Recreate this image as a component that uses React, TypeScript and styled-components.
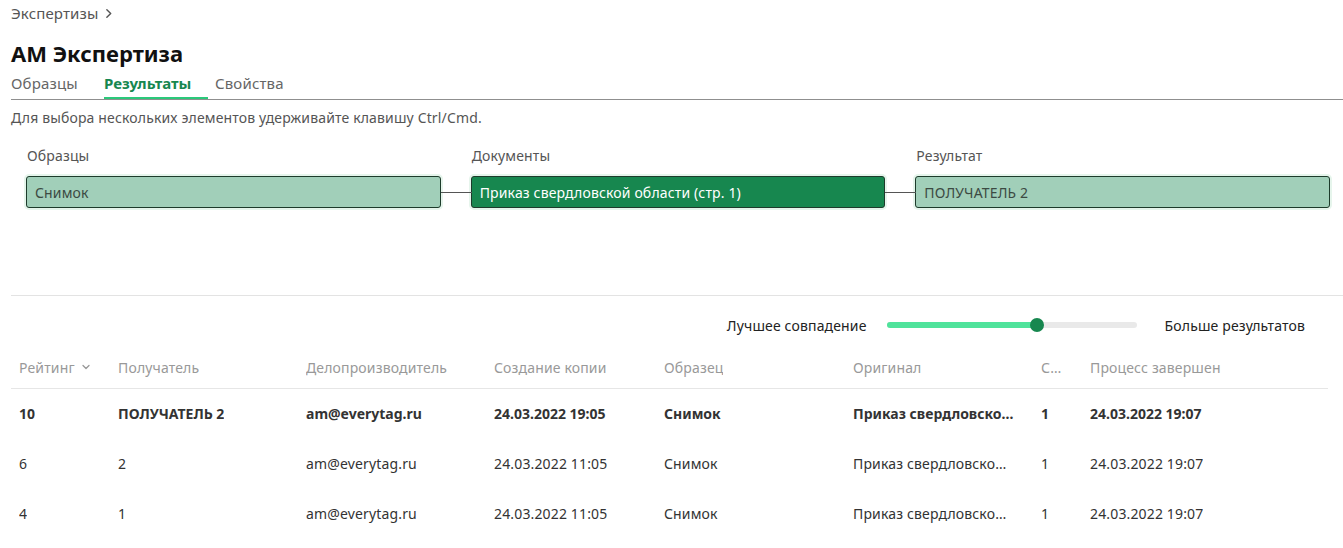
import React from "react";
import styled, { createGlobalStyle } from "styled-components";

const Global = createGlobalStyle`
  html, body { margin: 0; padding: 0; background: #fff; }
  body { font-family: "Noto Sans", "Open Sans", sans-serif; color: #333; letter-spacing: 0.15px; }
  * { box-sizing: border-box; }
`;

const Page = styled.div`
  padding: 0 0 0 11px;
  width: 1343px;
`;

const Breadcrumb = styled.div`
  display: flex;
  align-items: center;
  gap: 4px;
  height: 26px;
  font-size: 15px;
  color: #555;
`;

const Title = styled.h1`
  margin: 0;
  height: 50px;
  display: flex;
  align-items: center;
  padding-top: 4px;
  font-size: 22px;
  font-weight: 700;
  color: #111;
  letter-spacing: 0;
`;

const Tabs = styled.div`
  display: flex;
  align-items: flex-start;
  border-bottom: 1px solid #8f8f8f;
  height: 24px;
`;

const Tab = styled.div<{ $active?: boolean; $w?: number }>`
  position: relative;
  width: ${(p) => (p.$w ? `${p.$w}px` : "auto")};
  font-size: 15px;
  line-height: 16px;
  margin-top: -1px;
  color: ${(p) => (p.$active ? "#17874f" : "#666")};
  font-weight: ${(p) => (p.$active ? 700 : 400)};
  letter-spacing: ${(p) => (p.$active ? "0" : "0.15px")};
  &::after {
    content: "";
    display: ${(p) => (p.$active ? "block" : "none")};
    position: absolute;
    left: 0;
    right: 0;
    top: 22px;
    height: 2px;
    background: #2bc87a;
  }
`;

const Hint = styled.div`
  font-size: 14px;
  color: #555;
  height: 34px;
  display: flex;
  align-items: center;
`;

const Flow = styled.div`
  display: grid;
  grid-template-columns: 1fr 1fr 1fr;
  column-gap: 30px;
  padding: 0 13px 0 15px;
  height: 162px;
  border-bottom: 1px solid #e3e3e3;
`;

const FlowCol = styled.div`
  display: flex;
  flex-direction: column;
`;

const FlowLabel = styled.div`
  font-size: 14px;
  color: #555;
  height: 42px;
  display: flex;
  align-items: center;
  padding-left: 1px;
`;

const FlowBox = styled.div<{ $dark?: boolean; $link?: boolean }>`
  position: relative;
  height: 32px;
  border: 1px solid #1d3b2b;
  border-radius: 3px;
  background: ${(p) => (p.$dark ? "#17874f" : "#a1cfb9")};
  color: ${(p) => (p.$dark ? "#fff" : "#3c4a43")};
  box-shadow: 0 0 0 2px #e6f5ec;
  font-size: 14px;
  display: flex;
  align-items: center;
  padding-left: 8px;
  &::before {
    content: "";
    display: ${(p) => (p.$link ? "block" : "none")};
    position: absolute;
    right: 100%;
    top: 50%;
    width: 31px;
    height: 1px;
    background: #555;
  }
`;

const SliderRow = styled.div`
  display: flex;
  align-items: center;
  justify-content: flex-end;
  height: 58px;
  padding-right: 38px;
  font-size: 14px;
  color: #222;
`;

const Track = styled.div`
  position: relative;
  width: 250px;
  height: 6px;
  border-radius: 3px;
  background: #e9e9e9;
  margin: 0 28px 0 20px;
`;

const Fill = styled.div`
  height: 100%;
  border-radius: 3px;
  background: #4fe39b;
`;

const Thumb = styled.div`
  position: absolute;
  top: 50%;
  width: 14px;
  height: 14px;
  border-radius: 50%;
  background: #17874f;
  transform: translate(-50%, -50%);
`;

const Table = styled.div`
  width: 1317px;
  font-size: 14px;
`;

const cols = "99px 188px 188px 170px 189px 188px 49px 1fr";

const HeadRow = styled.div`
  display: grid;
  grid-template-columns: ${cols};
  height: 35px;
  padding-bottom: 8px;
  align-items: center;
  border-bottom: 1px solid #e6e6e6;
  color: #999;
`;

const Row = styled.div<{ $bold?: boolean }>`
  display: grid;
  grid-template-columns: ${cols};
  height: 50px;
  padding-bottom: 2px;
  align-items: center;
  color: #333;
  font-weight: ${(p) => (p.$bold ? 700 : 400)};
  letter-spacing: ${(p) => (p.$bold ? "0" : "0.15px")};
`;

const Cell = styled.div`
  padding: 0 19px 0 8px;
  white-space: nowrap;
  overflow: hidden;
  display: flex;
  align-items: center;
  gap: 6px;
  min-width: 0;
`;

const Text = styled.span`
  overflow: hidden;
  text-overflow: ellipsis;
  min-width: 0;
`;

const headers = [
  "Рейтинг",
  "Получатель",
  "Делопроизводитель",
  "Создание копии",
  "Образец",
  "Оригинал",
  "Страница",
  "Процесс завершен",
];

const rows = [
  { bold: true, c: ["10", "ПОЛУЧАТЕЛЬ 2", "am@everytag.ru", "24.03.2022 19:05", "Снимок", "Приказ свердловской области", "1", "24.03.2022 19:07"] },
  { bold: false, c: ["6", "2", "am@everytag.ru", "24.03.2022 11:05", "Снимок", "Приказ свердловской области", "1", "24.03.2022 19:07"] },
  { bold: false, c: ["4", "1", "am@everytag.ru", "24.03.2022 11:05", "Снимок", "Приказ свердловской области", "1", "24.03.2022 19:07"] },
];

const Chevron = ({ size = 10, dir = "right" }: { size?: number; dir?: "right" | "down" }) => (
  <svg width={size} height={size} viewBox="0 0 10 10" fill="none" stroke="currentColor" strokeWidth={1.3} strokeLinecap="round" strokeLinejoin="round">
    {dir === "right" ? <path d="M3.5 1.5 L7 5 L3.5 8.5" /> : <path d="M2 3.5 L5 6.5 L8 3.5" />}
  </svg>
);

export default function App() {
  const pct = 60;
  return (
    <Page>
      <Global />
      <Breadcrumb>
        Экспертизы <Chevron size={11} />
      </Breadcrumb>
      <Title>АМ Экспертиза</Title>
      <Tabs>
        <Tab $w={93}>Образцы</Tab>
        <Tab $active $w={104}>Результаты</Tab>
        <Tab style={{ marginLeft: 7 }}>Свойства</Tab>
      </Tabs>
      <Hint>Для выбора нескольких элементов удерживайте клавишу Ctrl/Cmd.</Hint>
      <Flow>
        <FlowCol>
          <FlowLabel>Образцы</FlowLabel>
          <FlowBox>Снимок</FlowBox>
        </FlowCol>
        <FlowCol>
          <FlowLabel>Документы</FlowLabel>
          <FlowBox $dark $link>Приказ свердловской области (стр. 1)</FlowBox>
        </FlowCol>
        <FlowCol>
          <FlowLabel>Результат</FlowLabel>
          <FlowBox $link>ПОЛУЧАТЕЛЬ 2</FlowBox>
        </FlowCol>
      </Flow>
      <SliderRow>
        Лучшее совпадение
        <Track>
          <Fill style={{ width: `${pct}%` }} />
          <Thumb style={{ left: `${pct}%` }} />
        </Track>
        Больше результатов
      </SliderRow>
      <Table>
        <HeadRow>
          {headers.map((h, i) => (
            <Cell key={h}>
              <Text>{h}</Text>
              {i === 0 && <Chevron size={10} dir="down" />}
            </Cell>
          ))}
        </HeadRow>
        {rows.map((r, i) => (
          <Row key={i} $bold={r.bold}>
            {r.c.map((v, j) => (
              <Cell key={j}>
                <Text>{v}</Text>
              </Cell>
            ))}
          </Row>
        ))}
      </Table>
    </Page>
  );
}
